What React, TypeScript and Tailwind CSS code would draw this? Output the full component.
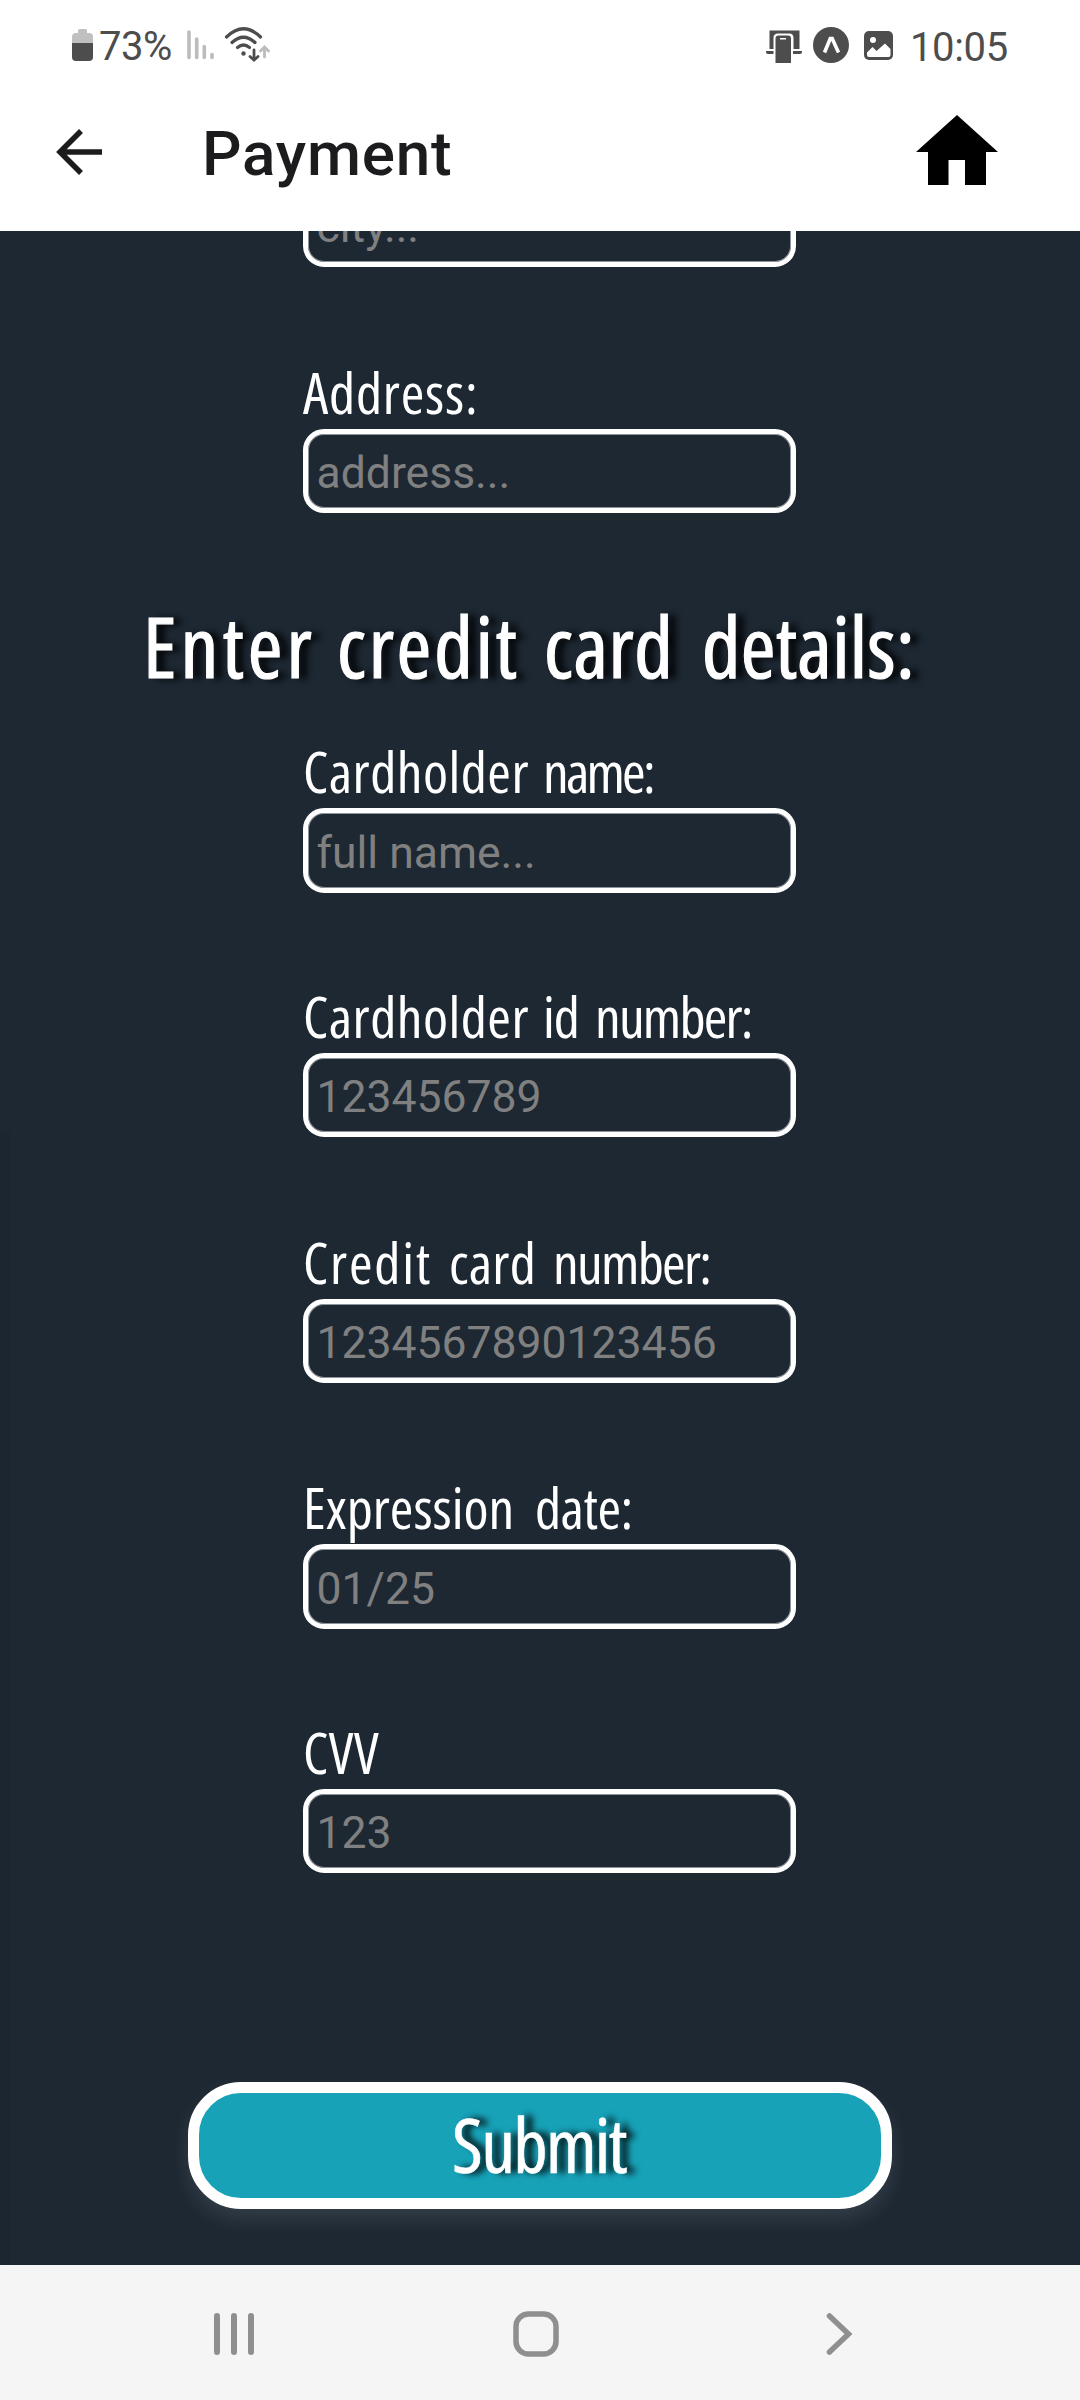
import type { ReactNode } from "react";

function StatusBar() {
  return (
    <div className="flex h-[92px] shrink-0 items-start justify-between px-[72px] text-[#4d4d4d]">
      <div className="flex h-[92px] items-start">
        <svg className="mt-[29px]" width="21" height="32" viewBox="0 0 21 32">
          <path d="M6 1.5Q6 0 7.500 0H13.500Q15 0 15 1.500V4H18Q21 4.500 21 8V14H0V8Q0 4.500 3 4H6Z" fill="#c0c0c0" />
          <path d="M0 14H21V28Q21 32 17 32H4Q0 32 0 28Z" fill="#4d4d4d" />
        </svg>
        <span className="ml-[6px] mt-[23px] text-[40px] leading-[48px] tracking-[-0.5px]">73%</span>
        <svg className="ml-[15px] mt-[30px]" width="28" height="30" viewBox="0 0 28 30" stroke="#bcbcbc" strokeWidth="3.600" strokeLinecap="round">
          <path d="M2 2V27.500M9.700 9V27.500M17.300 16.500V27.500M25 24.500V27.500" />
        </svg>
        <svg className="ml-[9px] mt-[27px]" width="46" height="36" viewBox="0 0 46 36" fill="none" stroke="#4d4d4d" strokeWidth="3.200" strokeLinecap="round">
          <path d="M2.500 10Q19.500 -6.500 36.500 10" />
          <path d="M8 15.500Q19.500 5 31 15.500" />
          <path d="M13.500 20.500Q19.500 15.500 25.500 20.500" />
          <circle cx="19.500" cy="26.500" r="2.200" fill="#4d4d4d" stroke="none" />
          <path d="M30 23V33M26 29.500L30 33.200L34 29.500" strokeWidth="2.800" />
          <path d="M40.500 30V20.500M36.500 24L40.500 20L44.500 24" stroke="#bcbcbc" strokeWidth="2.800" />
        </svg>
      </div>
      <div className="flex h-[92px] items-start">
        <svg className="mt-[30px]" width="36" height="33" viewBox="0 0 36 33" fill="#4d4d4d">
          <path d="M3.500 .5H33.500V19H27.500V8Q27.500 3.500 23.500 3.500H12Q7.500 3.500 7.500 8V19H3.500Z" />
          <path d="M0 21H7.500V24H2Q0 24 0 22ZM27 21H36V22Q36 24 34 24H27Z" />
          <path fillRule="evenodd" d="M9.500 8.500Q9.500 5.500 12.500 5.500H22Q25 5.500 25 8.500V33H9.500ZM14 8V9.500H20V8Z" />
        </svg>
        <svg className="ml-[11px] mt-[27px]" width="36" height="36" viewBox="0 0 36 36">
          <circle cx="18" cy="18" r="18" fill="#4d4d4d" />
          <path d="M11.500 25.500L17.300 11.500H19.200L25.500 25.500" fill="none" stroke="#fff" strokeWidth="3.600" />
        </svg>
        <svg className="ml-[15px] mt-[31px]" width="29" height="29" viewBox="0 0 29 29">
          <rect width="29" height="29" rx="5" fill="#4d4d4d" />
          <circle cx="9" cy="9" r="3" fill="#fff" />
          <path d="M3 21.500L8.500 16L12.500 20L21 12.500L26.500 18V24Q26.500 26 24.500 26H5Q3 26 3 24Z" fill="#fff" />
        </svg>
        <span className="ml-[17px] mt-[24px] text-[40px] leading-[48px] tracking-[-0.3px]">10:05</span>
      </div>
    </div>
  );
}

function Header() {
  return (
    <header className="flex h-[139px] shrink-0 items-start">
      <svg className="ml-[56px] mt-[37px]" width="46" height="47" viewBox="0 0 46 47" fill="none" stroke="#1c1c1e" strokeWidth="5.500">
        <path d="M46 23H4M25 2L4 23L25 44" />
      </svg>
      <h1 className="ml-[100px] mt-[26px] text-[62px] font-medium leading-[72px] tracking-[0.8px] text-[#1c1c1e]">Payment</h1>
      <svg className="ml-auto mr-[82px] mt-[23px]" width="82" height="70" viewBox="0 0 82 70">
        <path d="M41 0L82 37H70V70H49V45H32.500V70H12V37H0Z" />
      </svg>
    </header>
  );
}

function TextInput({ placeholder, height = "h-[84px]" }: { placeholder: string; height?: string }) {
  return (
    <input
      placeholder={placeholder}
      className={`${height} w-[493px] shrink-0 rounded-[21px] border-[5px] border-white pl-[8.5px] pt-[4px] text-[44.5px] shadow-[inset_0_0_0_1px_rgba(255,255,255,0.5)] placeholder:text-[#808080]`}
    />
  );
}

function Field({ children, placeholder, gap, height }: { children: ReactNode; placeholder: string; gap: string; height?: string }) {
  return (
    <label className={`flex shrink-0 flex-col ${gap}`}>
      <span className="-mt-[2px] flex h-[72px] items-start whitespace-nowrap font-['Open_Sans',sans-serif] text-[57px] leading-[70px] text-white [font-stretch:75%]">
        {children}
      </span>
      <TextInput placeholder={placeholder} height={height} />
    </label>
  );
}

function NavBar() {
  return (
    <nav className="flex h-[135px] shrink-0 items-start bg-[#f5f5f5] pt-[46px]">
      <svg className="ml-[214px] mt-[2px]" width="40" height="42" viewBox="0 0 40 42" stroke="#8f8f8f" strokeWidth="6" strokeLinecap="round">
        <path d="M3 3V39M20 3V39M37 3V39" />
      </svg>
      <svg className="ml-[259px]" width="46" height="46" viewBox="0 0 46 46" fill="none" stroke="#8f8f8f" strokeWidth="5.500">
        <rect x="3" y="3" width="40" height="40" rx="12.500" />
      </svg>
      <svg className="ml-[267px] mt-[2px]" width="28" height="42" viewBox="0 0 28 42" fill="none" stroke="#8f8f8f" strokeWidth="5.500" strokeLinecap="round">
        <path d="M3.500 3L22.500 21L3.500 39" />
      </svg>
    </nav>
  );
}

export default function App() {
  return (
    <div className="flex h-[2400px] w-[1080px] flex-col overflow-hidden bg-white font-[Roboto,sans-serif]">
      <StatusBar />
      <Header />
      <main className="relative flex h-[2034px] shrink-0 flex-col overflow-hidden bg-[#1d2833] pl-[303px]">
        <div className="absolute bottom-0 left-0 h-[1134px] w-[11px] bg-[#1c2630]" />
        <div className="-mt-[48px] flex">
          <TextInput placeholder="city..." />
        </div>
        <Field placeholder="address..." gap="mt-[92px]">
          <span className="tracking-[0.8px]">Address:</span>
        </Field>
        <h2 className="-ml-[160px] mt-[78px] flex h-[110px] shrink-0 whitespace-nowrap font-['Open_Sans',sans-serif] text-[84px] leading-[110px] text-white [-webkit-text-stroke:1.2px_white] [font-stretch:75%] [text-shadow:8px_1px_7px_#000]">
          <span className="w-[194px] tracking-[4px]">Enter</span>{" "}
          <span className="w-[207px] tracking-[2.8px]">credit</span>{" "}
          <span className="w-[158px] tracking-[0.6px]">card</span>{" "}
          <span className="tracking-[0.3px]">details:</span>
        </h2>
        <Field placeholder="full name..." gap="mt-[37px]" height="h-[85px]">
          <span className="w-[240px] tracking-[0.5px]">Cardholder</span>{" "}
          <span className="tracking-[-2.8px]">name:</span>
        </Field>
        <Field placeholder="123456789" gap="mt-[90px]">
          <span className="w-[240px] tracking-[0.5px]">Cardholder</span>{" "}
          <span className="w-[52px] tracking-[-1px]">id</span>{" "}
          <span className="tracking-[-1.8px]">number:</span>
        </Field>
        <Field placeholder="1234567890123456" gap="mt-[92px]">
          <span className="w-[146px] tracking-[1.8px]">Credit</span>{" "}
          <span className="w-[104px] tracking-[0.2px]">card</span>{" "}
          <span className="tracking-[-1.7px]">number:</span>
        </Field>
        <Field placeholder="01/25" gap="mt-[91px]" height="h-[85px]">
          <span className="w-[232px]">Expression</span>{" "}
          <span className="tracking-[-0.5px]">date:</span>
        </Field>
        <Field placeholder="123" gap="mt-[90px]">
          <span className="tracking-[0.5px]">CVV</span>
        </Field>
        <button className="-ml-[115px] mt-[209px] flex h-[127px] w-[704px] shrink-0 items-center justify-center rounded-[53px] border-[11px] border-white bg-[#17a2b8] pb-[2px] pr-[2px] font-['Open_Sans',sans-serif] text-[75px] tracking-[-1.7px] text-white [-webkit-text-stroke:0.6px_white] [font-stretch:75%] [text-shadow:8px_0_7px_#000] shadow-[0_10px_20px_rgba(255,255,255,0.1)]">
          Submit
        </button>
      </main>
      <NavBar />
    </div>
  );
}
